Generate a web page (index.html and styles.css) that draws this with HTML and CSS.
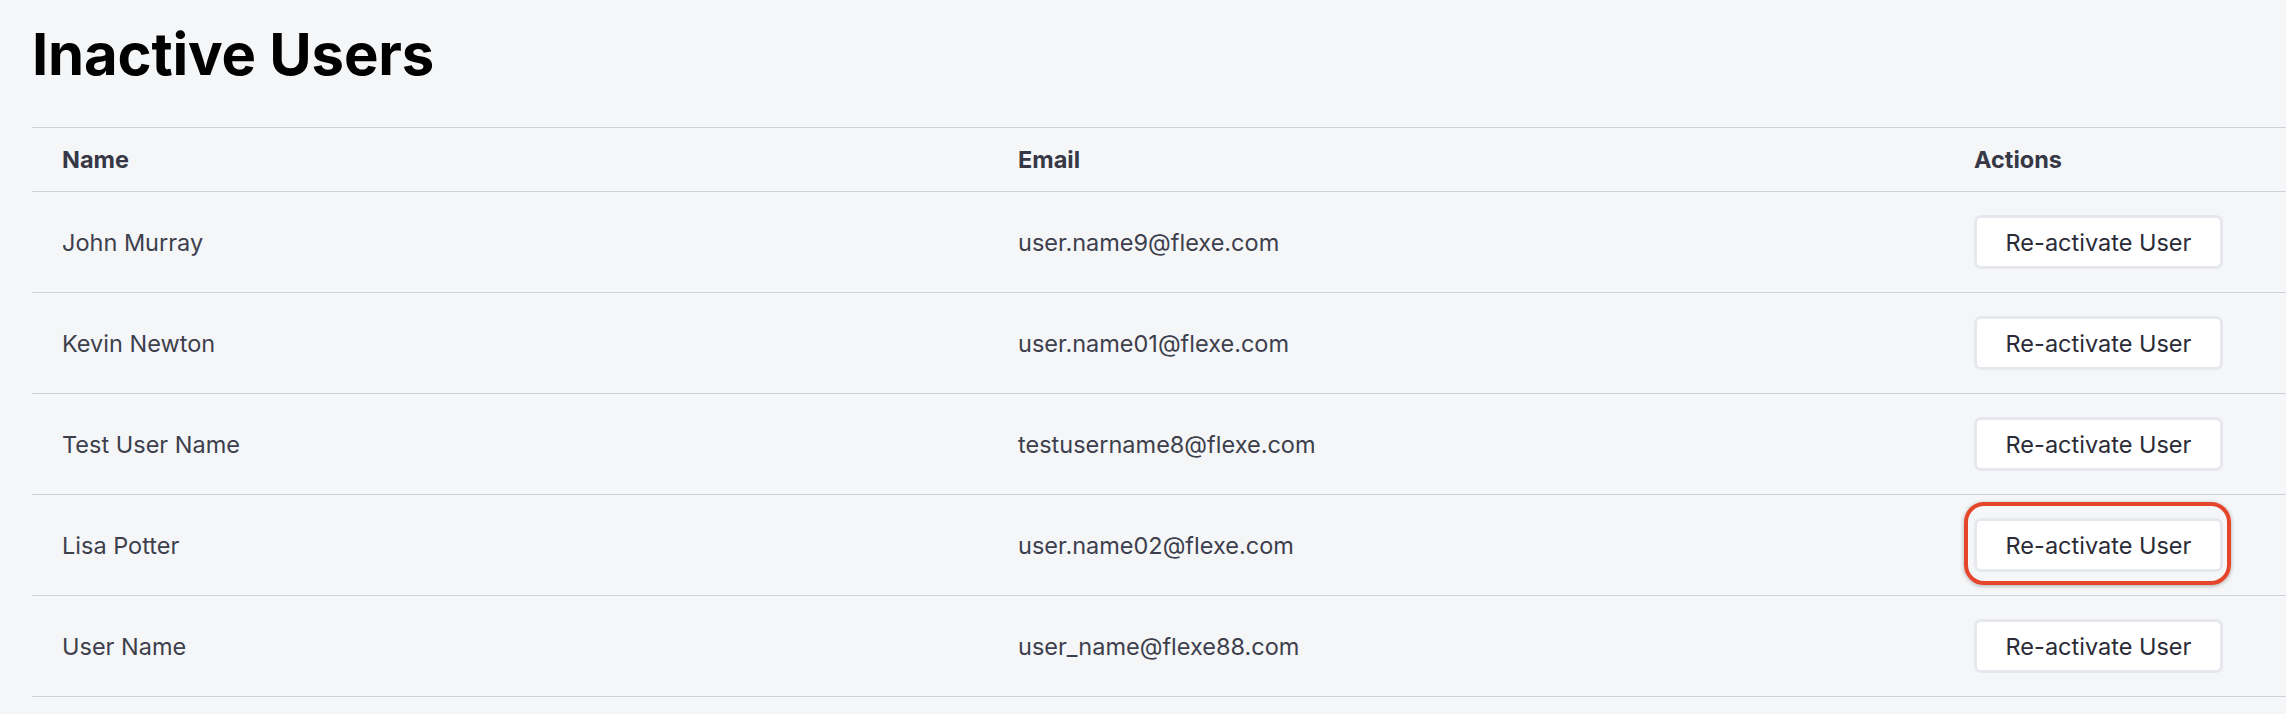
FILE: index.html
```html
<!DOCTYPE html>
<html lang="en">
<head>
<meta charset="utf-8">
<title>Inactive Users</title>
<link rel="stylesheet" href="styles.css">
</head>
<body>
<main class="page">
  <h1 class="title">Inactive Users</h1>
  <div class="table">
    <div class="row head">
      <div class="cell">Name</div>
      <div class="cell">Email</div>
      <div class="cell">Actions</div>
    </div>
    <div class="row">
      <div class="cell">John Murray</div>
      <div class="cell">user.name9@flexe.com</div>
      <div class="cell"><button class="btn">Re-activate User</button></div>
    </div>
    <div class="row">
      <div class="cell">Kevin Newton</div>
      <div class="cell">user.name01@flexe.com</div>
      <div class="cell"><button class="btn">Re-activate User</button></div>
    </div>
    <div class="row">
      <div class="cell">Test User Name</div>
      <div class="cell">testusername8@flexe.com</div>
      <div class="cell"><button class="btn">Re-activate User</button></div>
    </div>
    <div class="row">
      <div class="cell">Lisa Potter</div>
      <div class="cell">user.name02@flexe.com</div>
      <div class="cell"><span class="highlight"><button class="btn">Re-activate User</button></span></div>
    </div>
    <div class="row">
      <div class="cell">User Name</div>
      <div class="cell">user_name@flexe88.com</div>
      <div class="cell"><button class="btn">Re-activate User</button></div>
    </div>
  </div>
</main>
</body>
</html>
```
FILE: styles.css
```css
html, body {
  margin: 0;
  padding: 0;
  background: #f5f6f8;
}
body {
  font-family: Inter, "Noto Sans", "Liberation Sans", sans-serif;
  color: #3d3f4d;
}
.page {
  padding-left: 32px;
}
.title {
  margin: 19px 0 38px 0;
  font-size: 58px;
  line-height: 70px;
  font-weight: 700;
  color: #000;
  letter-spacing: -0.2px;
}
.table {
  display: flex;
  flex-direction: column;
}
.row {
  display: grid;
  grid-template-columns: 956px 956px 1fr;
  align-items: center;
  height: 100px;
  border-bottom: 1px solid #cfd1d6;
  font-size: 23.5px;
}
.row.head {
  height: 63px;
  border-top: 1px solid #cfd1d6;
  font-weight: 650;
  color: #363846;
}
.cell {
  padding-left: 30px;
  display: flex;
  align-items: center;
}
.btn {
  box-sizing: border-box;
  width: 249px;
  height: 54px;
  background: #ffffff;
  border: 3px solid #e7e8ee;
  border-radius: 7px;
  font-family: inherit;
  font-size: 23.5px;
  color: #2a2b36;
  padding: 0;
  cursor: pointer;
}
.highlight {
  position: relative;
  display: inline-flex;
}
.highlight::after {
  content: "";
  position: absolute;
  top: -16px;
  bottom: -13px;
  left: -10px;
  right: -8px;
  border: 4px solid #e5462b;
  border-radius: 20px;
  box-shadow: 0 1px 4px rgba(0, 0, 0, 0.3);
  pointer-events: none;
}
```
